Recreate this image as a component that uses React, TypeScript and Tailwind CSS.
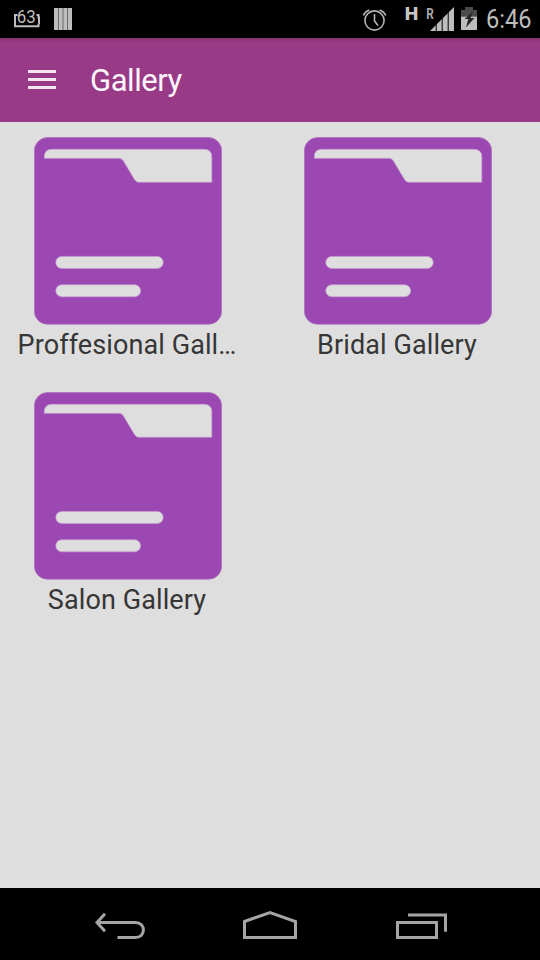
const folders = ["Proffesional Gall…", "Bridal Gallery", "Salon Gallery"];

function FolderIcon() {
  return (
    <svg width="188" height="188" viewBox="0 0 188 188" className="block">
      <rect x="0.4" y="0.6" width="187.2" height="186.6" rx="13" fill="#9b48b2" stroke="#ad6fbe" strokeWidth="0.8" />
      <g fill="#dedede" stroke="#c99fd2" strokeWidth="0.7">
        <path d="M10.3 21.3V20Q10.3 12.3 18 12.3H170Q177.8 12.3 177.8 20V45.2H105Q102 45.2 100.5 42.5L89.5 24Q88 21.3 85 21.3Z" />
        <rect x="21.8" y="119.4" width="107.4" height="12" rx="6" />
        <rect x="21.8" y="147.8" width="84.8" height="12" rx="6" />
      </g>
    </svg>
  );
}

function StatusBar() {
  return (
    <div className="h-[38px] bg-black">
      <svg width="540" height="38" viewBox="0 0 540 38" fill="none">
        <path d="M17.5 15H15V26.2H38.5V23.5M36.5 15H38.5V17.5H39V23H38.5" stroke="#bdbdbd" strokeWidth="2" />
        <path d="M54 8h18v22H54z" fill="#bdbdbd" />
        <path d="M58.5 8v22M63 8v22M67.5 8v22" stroke="#6d6d6d" strokeWidth="1" />
        <text x="16.8" y="23.3" fontSize="18" textLength="19" lengthAdjust="spacingAndGlyphs" fill="#bdbdbd">63</text>
        {/* alarm */}
        <g stroke="#b4b4b4" strokeWidth="1.6">
          <circle cx="374.5" cy="20.5" r="9.6" />
          <path d="M374.5 14V21L378 25.5M363.3 15.5Q365 11.5 369.3 10M379.7 10Q384 11.5 385.8 15.5" />
        </g>
        <text x="404.8" y="20" fontSize="18" fontWeight="900" textLength="13.5" lengthAdjust="spacingAndGlyphs" fill="#c6c6c6">H</text>
        <text x="426.3" y="18.6" fontSize="14" fontWeight="700" textLength="7.5" lengthAdjust="spacingAndGlyphs" fill="#a8a8a8">R</text>
        {/* signal */}
        <path d="M430 31L454 7V31Z" fill="#bdbdbd" />
        <path d="M436.2 20v12M442.2 14v18M448.2 8v24" stroke="#000" strokeWidth="1" />
        {/* battery */}
        <path d="M465 7h8v3h4v6.5h-16V10h4z" fill="#4a4a4a" />
        <path d="M461 16.5h16V30h-16z" fill="#bdbdbd" />
        <path d="M473 11.5l-8.5 7.500h3.800L466 27.500l8.500-9.500h-4z" fill="#262626" />
        <text x="486" y="28.3" fontSize="25" textLength="45.5" lengthAdjust="spacingAndGlyphs" fill="#bdbdbd">6:46</text>
      </svg>
    </div>
  );
}

function NavBar() {
  return (
    <nav className="h-[72px] bg-black">
      <svg width="540" height="72" viewBox="0 0 540 72" fill="none" stroke="#a5a5a5" strokeWidth="3">
        <path d="M97 34.5H135.5C146 34.5 146 49.5 135.5 49.5H117.5M105 25.8L97 34.5L105 43.2" />
        <path d="M244.5 33.5L270 24.5L295.5 33.5V49.5H244.5Z" />
        <path d="M397.5 34.5H436.5V49.5H397.5ZM408 27H445.5V43.7" />
      </svg>
    </nav>
  );
}

export default function App() {
  return (
    <div className="flex h-[960px] w-[540px] flex-col overflow-hidden bg-[#dedede] font-['Roboto',sans-serif]">
      <StatusBar />
      <header className="flex h-[84px] items-center bg-[#983a85] bg-linear-to-b from-[#87346f] to-[#983a85] to-[4px] pl-7">
        <button aria-label="Menu" className="mb-[2px] flex w-7 flex-col gap-[5px]">
          <span className="h-[3px] bg-[#f4e4f2]" />
          <span className="h-[3px] bg-[#f4e4f2]" />
          <span className="h-[3px] bg-[#f4e4f2]" />
        </button>
        <h1 className="ml-[34px] mt-px text-[31px] leading-9 tracking-[-0.45px] text-[#fdf5fc]">Gallery</h1>
      </header>
      <main className="grid flex-1 grid-cols-[255px_255px] content-start gap-x-[15px] pt-[15px]">
        {folders.map((name) => (
          <div key={name} className="flex h-[255px] flex-col items-center">
            <FolderIcon />
            <p className="mt-1 mr-px whitespace-nowrap text-[27px] leading-8 tracking-[0.1px] text-[#363636]">{name}</p>
          </div>
        ))}
      </main>
      <NavBar />
    </div>
  );
}
